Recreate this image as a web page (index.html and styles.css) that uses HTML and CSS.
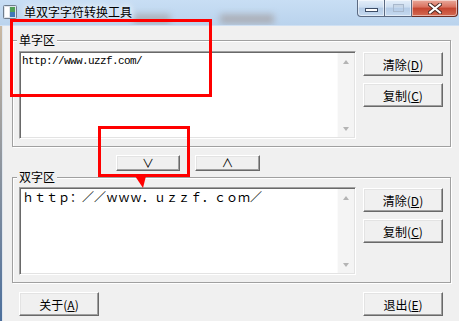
FILE: index.html
```html
<!DOCTYPE html>
<html lang="zh-CN">
<head>
  <meta charset="UTF-8" />
  <title>单双字字符转换工具</title>
  <link rel="stylesheet" href="styles.css">
</head>
<body>
  <div class="window">
    <!-- Title bar -->
    <div class="titlebar">
      <span class="haze haze-a"></span>
      <span class="haze haze-b"></span>
      <svg class="app-icon" width="14" height="14" viewBox="0 0 14 14">
        <rect x="0.5" y="0.5" width="13" height="13" rx="1" fill="#dfe4ea" stroke="#6f7d8c"/>
        <rect x="2" y="2" width="4" height="10" fill="#ffffff"/>
        <rect x="7" y="2" width="5" height="5" fill="#4f9f57"/>
        <rect x="7" y="7" width="5" height="5" fill="#3f78b8"/>
      </svg>
      <span class="title">单双字字符转换工具</span>
      <div class="caption">
        <span class="cap cap-min"><i></i></span>
        <span class="cap cap-max"><i></i></span>
        <span class="cap cap-close">
          <svg width="14" height="11" viewBox="0 0 14 11">
            <path d="M2 1.5 L12 9.5 M12 1.5 L2 9.5" stroke="#4b2a24" stroke-width="4" stroke-linecap="square"/>
            <path d="M2 1.5 L12 9.5 M12 1.5 L2 9.5" stroke="#ffffff" stroke-width="2" stroke-linecap="square"/>
          </svg>
        </span>
      </div>
    </div>

    <div class="frame">
      <div class="client">
        <fieldset class="group group-single">
          <legend>单字区</legend>
          <div class="group-body">
            <div class="edit">
              <div class="edit-text mono">http://www.uzzf.com/</div>
              <div class="vscroll"><span class="arr arr-up"></span><span class="arr arr-down"></span></div>
            </div>
            <div class="side">
              <button class="btn">清除(<u>D</u>)</button>
              <button class="btn">复制(<u>C</u>)</button>
            </div>
          </div>
        </fieldset>

        <div class="swap-row">
          <button class="btn btn-small">∨</button>
          <button class="btn btn-small">∧</button>
        </div>

        <fieldset class="group group-double">
          <legend>双字区</legend>
          <div class="group-body">
            <div class="edit">
              <div class="edit-text wide">ｈｔｔｐ：／／ｗｗｗ．ｕｚｚｆ．ｃｏｍ／</div>
              <div class="vscroll"><span class="arr arr-up"></span><span class="arr arr-down"></span></div>
            </div>
            <div class="side">
              <button class="btn">清除(<u>D</u>)</button>
              <button class="btn">复制(<u>C</u>)</button>
            </div>
          </div>
        </fieldset>

        <div class="bottom-row">
          <button class="btn">关于(<u>A</u>)</button>
          <button class="btn">退出(<u>E</u>)</button>
        </div>
      </div>
    </div>

    <!-- red annotation marks -->
    <div class="mark mark-a"></div>
    <div class="mark mark-b"></div>
    <svg class="mark-arrow" width="14" height="14" viewBox="0 0 14 14">
      <polygon points="1,0 12,0 9,12" fill="#ff0000"/>
    </svg>
  </div>
</body>
</html>
```

FILE: styles.css
```css
* {
  box-sizing: border-box;
}

body {
  margin: 0;
  font-family: "Noto Sans CJK SC", "Noto Sans", sans-serif;
  font-size: 12px;
  color: #000;
  background: #f0f0f0;
  overflow: hidden;
}

.window {
  position: relative;
  width: 459px;
  height: 321px;
}

/* Aero title bar */
.titlebar {
  position: relative;
  display: flex;
  align-items: flex-start;
  height: 26px;
  padding-left: 3px;
  background: linear-gradient(#c8def4, #bad3ed);
  border-bottom: 1px solid #cfe0f3;
  overflow: hidden;
}

.haze {
  position: absolute;
  top: 14px;
  height: 10px;
  background: rgba(140, 110, 90, 0.35);
  filter: blur(3px);
}

.haze-a {
  left: 134px;
  width: 36px;
}

.haze-b {
  left: 220px;
  width: 54px;
}

.app-icon {
  position: relative;
  margin-top: 5px;
  flex-shrink: 0;
}

.title {
  position: relative;
  margin: 3px 0 0 7px;
  line-height: 17px;
  font-size: 12px;
  text-shadow: 0 0 6px #fff, 0 0 10px #fff;
}

.caption {
  position: relative;
  display: flex;
  margin-left: auto;
  margin-right: 1px;
  height: 17px;
}

.cap {
  display: flex;
  align-items: center;
  justify-content: center;
  height: 17px;
  border: 1px solid #5b6a82;
  border-top: none;
  background: linear-gradient(#e4eef9, #cddef1 45%, #b4cbe6 50%, #c6daf0);
  box-shadow: inset 0 0 0 1px rgba(255, 255, 255, 0.5);
}

.cap-min {
  width: 28px;
  border-radius: 0 0 0 4px;
}

.cap-min i {
  display: block;
  width: 13px;
  height: 4px;
  margin-top: 4px;
  background: #fff;
  border: 1px solid #3d4d66;
}

.cap-max {
  width: 27px;
  border-left: none;
}

.cap-max i {
  display: block;
  width: 11px;
  height: 8px;
  border: 1px solid #a8b8cc;
  box-shadow: inset 0 2px 0 #c8d6e6;
}

.cap-close {
  width: 46px;
  border-left: none;
  border-color: #6b2c22;
  border-radius: 0 0 4px 0;
  background: linear-gradient(#e9aa9c, #d9705d 45%, #c4442f 50%, #d36a52);
}

/* Window frame + client area */
.frame {
  padding-left: 2px;
  height: 295px;
  background: linear-gradient(#c9b8a2, #4c6f9c);
}

.client {
  height: 100%;
  padding: 7px 0 0 9px;
  background: #f0f0f0;
  border-left: 1px solid #dfe6ee;
}

/* Group boxes */
.group {
  width: 439px;
  min-width: 0;
  margin: 0;
  padding: 4px 7px 7px 6px;
  border: 1px solid #a0a0a0;
  box-shadow: inset 1px 1px 0 #fff, 1px 1px 0 #fff;
}

.group-double {
  padding-top: 3px;
}

.group legend {
  margin-left: -2px;
  padding: 0 2px;
  line-height: 14px;
  background: #f0f0f0;
}

.group-body {
  display: flex;
  gap: 7px;
}

.edit {
  display: flex;
  width: 337px;
  height: 88px;
  padding: 1px;
  background: #fff;
  border: 1px solid;
  border-color: #a0a0a0 #fff #fff #a0a0a0;
  box-shadow: inset 1px 1px 0 #696969, inset -1px -1px 0 #e3e3e3;
}

.edit-text {
  flex: 1;
  padding: 1px 0 0 1px;
  line-height: 14px;
  white-space: nowrap;
}

.mono {
  font-family: "Liberation Mono", monospace;
  font-size: 11px;
  letter-spacing: -0.6px;
}

.wide {
  font-size: 12px;
}

.vscroll {
  display: flex;
  flex-direction: column;
  justify-content: space-between;
  align-items: center;
  width: 17px;
  padding: 7px 0 6px;
  background: #f4f4f4;
  border-left: 1px solid #fbfbfb;
}

.arr {
  width: 0;
  height: 0;
  border-left: 3.5px solid transparent;
  border-right: 3.5px solid transparent;
}

.arr-up {
  border-bottom: 4px solid #b4b4b4;
}

.arr-down {
  border-top: 4px solid #b4b4b4;
}

.side {
  display: flex;
  flex-direction: column;
  gap: 7px;
  padding-top: 1px;
}

/* Classic push buttons */
.btn {
  width: 80px;
  height: 24px;
  padding: 0;
  font: inherit;
  color: #000;
  background: #f0f0f0;
  border: 1px solid;
  border-color: #fff #696969 #696969 #fff;
  box-shadow: inset -1px -1px 0 #a0a0a0, inset 1px 1px 0 #e3e3e3;
}

.btn u {
  text-underline-offset: 1px;
}

.swap-row {
  display: flex;
  gap: 15px;
  height: 23px;
  padding: 8px 0 0 104px;
}

.btn-small {
  width: 64px;
  height: 16px;
  line-height: 14px;
}

.btn-small + .btn-small {
  width: 65px;
}

.bottom-row {
  display: flex;
  justify-content: space-between;
  width: 439px;
  margin-top: 9px;
  padding: 0 8px 0 7px;
}

/* Red annotation marks */
.mark {
  position: absolute;
  border: 3px solid #ff0000;
}

.mark-a {
  left: 10px;
  top: 19px;
  width: 202px;
  height: 78px;
}

.mark-b {
  left: 98px;
  top: 126px;
  width: 92px;
  height: 51px;
}

.mark-arrow {
  position: absolute;
  left: 134px;
  top: 176px;
}
```
